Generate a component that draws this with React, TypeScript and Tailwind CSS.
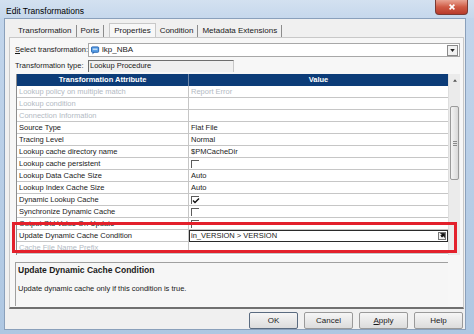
import React from "react";

type Row = {
  a: string;
  v?: string;
  dis?: boolean;
  check?: boolean;
  edit?: string;
};

const rows: Row[] = [
  { a: "Lookup policy on multiple match", v: "Report Error", dis: true },
  { a: "Lookup condition", v: "", dis: true },
  { a: "Connection Information", v: "", dis: true },
  { a: "Source Type", v: "Flat File" },
  { a: "Tracing Level", v: "Normal" },
  { a: "Lookup cache directory name", v: "$PMCacheDir" },
  { a: "Lookup cache persistent", check: false },
  { a: "Lookup Data Cache Size", v: "Auto" },
  { a: "Lookup Index Cache Size", v: "Auto" },
  { a: "Dynamic Lookup Cache", check: true },
  { a: "Synchronize Dynamic Cache", check: false },
  { a: "Output Old Value On Update", check: false },
  { a: "Update Dynamic Cache Condition", edit: "in_VERSION > VERSION" },
  { a: "Cache File Name Prefix", v: "", dis: true },
];

function CheckBox({ on }: { on: boolean }) {
  return (
    <div className="w-[8px] h-[8px] border-t border-l border-[#5c5c5c] relative">
      {on && (
        <svg viewBox="0 0 8 8" className="absolute left-0 top-0 w-[8px] h-[8px]">
          <path d="M1 3.5 L3 5.5 L7 1.5" stroke="#111" strokeWidth="1.4" fill="none" />
        </svg>
      )}
    </div>
  );
}

function Tab({ label, active }: { label: string; active?: boolean }) {
  return (
    <div
      className={
        active
          ? "px-[4px] h-[15px] -mb-px bg-[#f7f7f7] border border-b-0 border-[#c8c8c8] flex items-center"
          : "px-[4px] h-[12px] mt-[2px] border-r border-[#8c8c8c] flex items-center"
      }
    >
      {label}
    </div>
  );
}

function Button({ label, primary }: { label: React.ReactNode; primary?: boolean }) {
  return (
    <div
      className={
        "w-[49px] h-[17px] flex items-center justify-center rounded-[2px] bg-gradient-to-b from-[#f6f6f6] to-[#dcdcdc] border " +
        (primary ? "border-[#5a6b80]" : "border-[#9a9a9a]")
      }
    >
      {label}
    </div>
  );
}

export default function App() {
  return (
    <div
      className="relative w-[474px] h-[334px] bg-gradient-to-b from-[#c3d6ec] to-[#aec7e2] flex flex-col text-[7.5px] text-[#1a1a1a] overflow-hidden"
      style={{ fontFamily: '"Liberation Sans", Arial, sans-serif' }}
    >
      {/* title bar */}
      <div className="h-[20px] flex items-start justify-between pl-[6px] pr-[6px] bg-gradient-to-b from-[#d3e1f0] to-[#c6d8ec]">
        <span className="mt-[5px] text-[8.5px] text-black">Edit Transformations</span>
        <div className="w-[33px] h-[15px] rounded-b-[4px] bg-gradient-to-b from-[#e8a393] via-[#cf5a45] to-[#b83a2a] border border-[#7a3a33] border-t-0 flex items-center justify-center">
          <svg viewBox="0 0 10 10" className="w-[8px] h-[8px]">
            <path d="M2 2 L8 8 M8 2 L2 8" stroke="#fff" strokeWidth="2" />
          </svg>
        </div>
      </div>

      {/* dialog client */}
      <div className="flex-1 ml-[4px] mr-[8px] mb-[4px] bg-[#f0f0f0] border border-[#8aa0bb] flex flex-col pl-[4px] pr-[1px] pt-[4px]">
        {/* tabs */}
        <div className="flex items-end h-[14px] pl-[5px] text-[8px]">
          <Tab label="Transformation" />
          <Tab label="Ports" />
          <div className="w-[5px]" />
          <Tab label="Properties" active />
          <Tab label="Condition" />
          <Tab label="Metadata Extensions" />
        </div>

        {/* tab panel */}
        <div className="h-[272px] bg-[#f7f7f7] border border-[#c8c8c8] border-b-[2px] border-b-[#707070] flex flex-col pl-[5px] pr-[3px]">
          {/* select transformation */}
          <div className="flex items-center mt-[5px] h-[14px]">
            <span className="w-[73px] whitespace-nowrap">
              <span className="underline">S</span>elect transformation:
            </span>
            <div className="flex-1 h-[14px] bg-white border border-[#a8a8a8] flex items-center pl-[2px] pr-[1px] text-[8px]">
              <svg viewBox="0 0 10 10" className="w-[9px] h-[9px] mr-[2px]">
                <rect x="0.5" y="1" width="8" height="6" rx="1" fill="#5aa0e6" stroke="#1f5fae" />
                <path d="M2 7 L1.5 9.5 L4 7 Z" fill="#1f5fae" />
                <rect x="2" y="3" width="5" height="1" fill="#fff" />
              </svg>
              <span className="flex-1">lkp_NBA</span>
              <div className="w-[11px] h-[11px] border border-[#8a8a8a] bg-[#f2f2f2] flex items-center justify-center">
                <svg viewBox="0 0 6 4" className="w-[5px] h-[3px]">
                  <path d="M0 0 H6 L3 4 Z" fill="#222" />
                </svg>
              </div>
            </div>
          </div>

          {/* transformation type */}
          <div className="flex items-center mt-[2px] h-[13px]">
            <span className="w-[73px] whitespace-nowrap">Transformation type:</span>
            <div className="w-[146px] h-[12px] border-t border-l border-[#6e6e6e] border-r border-r-[#c8c8c8] bg-[#f0f0f0] flex items-center pl-[1px] whitespace-nowrap">
              Lookup Procedure
            </div>
          </div>

          {/* grid */}
          <div className="flex mt-[2px] ml-[1px] h-[181px]">
            <div className="w-[432px] bg-white border-l border-[#8d8d8d] flex flex-col overflow-hidden">
              <div className="h-[12px] flex shrink-0 bg-[#0c3c78] text-white font-bold">
                <div className="w-[172px] border-r border-[#6d86a8] flex items-center justify-center">
                  Transformation Attribute
                </div>
                <div className="flex-1 flex items-center justify-center">Value</div>
              </div>
              {rows.map((r) => (
                <div key={r.a} className="h-[12px] shrink-0 flex border-b border-[#c6c6c6]">
                  <div
                    className={
                      "w-[172px] border-r border-[#c6c6c6] pl-[2px] flex items-center whitespace-nowrap " +
                      (r.dis ? "text-[#b3bac3]" : "")
                    }
                  >
                    {r.a}
                  </div>
                  <div
                    className={
                      "flex-1 flex items-center pl-[2px] whitespace-nowrap " + (r.dis ? "text-[#b3bac3]" : "")
                    }
                  >
                    {r.check !== undefined && <CheckBox on={r.check} />}
                    {r.v}
                    {r.edit && (
                      <div className="flex-1 h-[12px] -ml-[2px] border border-[#2a2a2a] flex items-center pl-[1px] pr-[1px]">
                        <span className="flex-1">{r.edit}</span>
                        <div className="w-[8px] h-[8px] border border-[#777] bg-[#eee] flex items-center justify-center">
                          <svg viewBox="0 0 6 6" className="w-[5px] h-[5px]">
                            <path d="M0.5 0.5 H5.5 V5.5 M1 3 L4 3 L2.5 5 Z" stroke="#111" strokeWidth="1" fill="#111" />
                          </svg>
                        </div>
                      </div>
                    )}
                  </div>
                </div>
              ))}
            </div>
            {/* scrollbar */}
            <div className="w-[12px] bg-[#ebebeb] border-l border-[#dedede] flex flex-col items-center">
              <div className="h-[12px] flex items-center justify-center">
                <svg viewBox="0 0 6 4" className="w-[4px] h-[3px]">
                  <path d="M0 4 H6 L3 0 Z" fill="#555" />
                </svg>
              </div>
              <div className="mt-[20px] w-[9px] h-[74px] rounded-[2px] border border-[#9a9a9a] bg-gradient-to-r from-[#f4f4f4] to-[#d9d9d9] flex flex-col items-center justify-center gap-[1px]">
                <div className="w-[4px] h-px bg-[#8a8a8a]" />
                <div className="w-[4px] h-px bg-[#8a8a8a]" />
                <div className="w-[4px] h-px bg-[#8a8a8a]" />
              </div>
            </div>
          </div>

          {/* description */}
          <div className="mt-[7px] ml-0 w-[433px] h-[44px] bg-[#f6f6f6] border-t border-l border-[#a0a0a0] pl-[2px] pt-[1px]">
            <div className="font-bold text-[8.5px]">Update Dynamic Cache Condition</div>
            <div className="mt-[6px]">Update dynamic cache only if this condition is true.</div>
          </div>
        </div>

        {/* buttons */}
        <div className="flex justify-end gap-[6px] mt-[3px] pr-[1px] text-[8px]">
          <Button label="OK" primary />
          <Button label="Cancel" />
          <Button
            label={
              <span>
                <span className="underline">A</span>pply
              </span>
            }
          />
          <Button label="Help" />
        </div>
      </div>

      {/* red annotation box */}
      <div className="absolute left-[12px] top-[222px] w-[445px] h-[31px] border-[3px] border-[#e3202b] pointer-events-none" />
    </div>
  );
}
